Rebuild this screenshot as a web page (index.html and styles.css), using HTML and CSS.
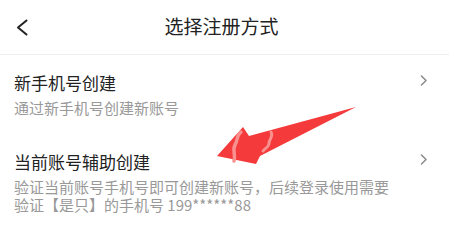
FILE: index.html
```html
<!DOCTYPE html>
<html lang="zh-CN">
<head>
<meta charset="utf-8">
<link rel="stylesheet" href="styles.css">
</head>
<body>
<div class="page">
  <header class="header">
    <div class="back">
      <svg width="14" height="17" viewBox="0 0 14 17"><path d="M11.5 1.5 L3 8.5 L11.5 15.5" fill="none" stroke="#222" stroke-width="2" stroke-linecap="round" stroke-linejoin="round"/></svg>
    </div>
    <div class="title">选择注册方式</div>
    <div class="spacer"></div>
  </header>
  <div class="item">
    <div class="text">
      <div class="item-title">新手机号创建</div>
      <div class="item-sub">通过新手机号创建新账号</div>
    </div>
    <svg class="chev" width="8" height="11" viewBox="0 0 8 11"><path d="M1.5 1 L6 5.5 L1.5 10" fill="none" stroke="#8a8a8a" stroke-width="1.5" stroke-linecap="round" stroke-linejoin="round"/></svg>
  </div>
  <div class="item">
    <div class="text">
      <div class="item-title">当前账号辅助创建</div>
      <div class="item-sub">验证当前账号手机号即可创建新账号，后续登录使用需要<br>验证【是只】的手机号 199******88</div>
    </div>
    <svg class="chev" width="8" height="11" viewBox="0 0 8 11"><path d="M1.5 1 L6 5.5 L1.5 10" fill="none" stroke="#8a8a8a" stroke-width="1.5" stroke-linecap="round" stroke-linejoin="round"/></svg>
  </div>
  <svg class="arrow" width="449" height="251" viewBox="0 0 449 251">
    <polygon points="217,156 243,127 249,136 356,107 260,156 256,164" fill="#f43a3a"/>
    <path d="M241,132 C236,136 238,140 235,145 C232,150 236,155 234,161" fill="none" stroke="#f8918f" stroke-width="3.5" stroke-linecap="round"/>
    <path d="M271,132 C274,137 268,140 269,144 C268,148 264,149 263,151" fill="none" stroke="#f8918f" stroke-width="3" stroke-linecap="round"/>
  </svg>
</div>
</body>
</html>
```
FILE: styles.css
```css
html, body {
  margin: 0;
  padding: 0;
  background: #fff;
}
.page {
  position: relative;
  width: 449px;
  height: 251px;
  overflow: hidden;
  font-family: "Noto Sans CJK SC", "Noto Sans", sans-serif;
}
.header {
  height: 54px;
  border-bottom: 1px solid #ededed;
  display: grid;
  grid-template-columns: 60px 1fr 60px;
  align-items: center;
}
.back {
  padding-left: 15px;
  display: flex;
  align-items: center;
  padding-top: 1px;
}
.title {
  text-align: center;
  font-size: 19px;
  color: #222;
  margin-left: -6px;
  margin-top: -3px;
}
.item {
  display: flex;
  padding: 16px 21px 17px 14px;
}
.text {
  flex: 1;
}
.item-title {
  font-size: 17px;
  line-height: 24px;
  color: #222;
}
.item-sub {
  margin-top: 4px;
  font-size: 15px;
  line-height: 18px;
  color: #999;
}
.chev {
  margin-top: 4px;
}
.arrow {
  position: absolute;
  left: 0;
  top: 0;
  pointer-events: none;
}
```
